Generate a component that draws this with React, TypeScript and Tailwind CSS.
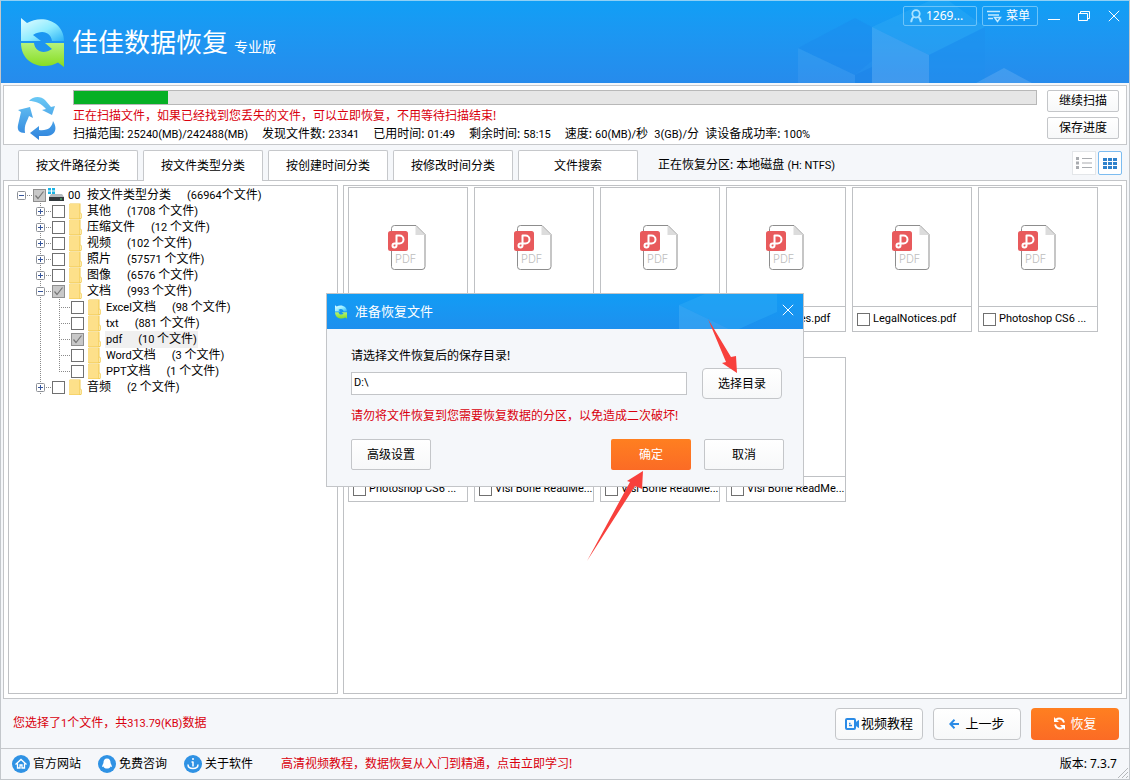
import { useState, type ReactNode } from "react";

type GuideKind = "blank" | "line" | "tee" | "corner" | "plus" | "minus" | "root";

type TreeRow = {
  guides: GuideKind[];
  name: string;
  latin?: string;
  count: string;
  checked?: boolean;
  selected?: boolean;
};

const ROWS: TreeRow[] = [
  { guides: ["blank", "plus"], name: "其他", count: "1708" },
  { guides: ["blank", "plus"], name: "压缩文件", count: "12" },
  { guides: ["blank", "plus"], name: "视频", count: "102" },
  { guides: ["blank", "plus"], name: "照片", count: "57571" },
  { guides: ["blank", "plus"], name: "图像", count: "6576" },
  { guides: ["blank", "minus"], name: "文档", count: "993", checked: true },
  { guides: ["blank", "line", "tee"], latin: "Excel", name: "文档", count: "98" },
  { guides: ["blank", "line", "tee"], latin: "txt", name: "", count: "881" },
  { guides: ["blank", "line", "tee"], latin: "pdf", name: "", count: "10", checked: true, selected: true },
  { guides: ["blank", "line", "tee"], latin: "Word", name: "文档", count: "3" },
  { guides: ["blank", "line", "corner"], latin: "PPT", name: "文档", count: "1" },
  { guides: ["blank", "plus"], name: "音频", count: "2" },
];

const FILES = [
  "LegalNotices.pdf",
  "LegalNotices.pdf",
  "LegalNotices.pdf",
  "LegalNotices.pdf",
  "LegalNotices.pdf",
  "Photoshop CS6 ...",
  "Photoshop CS6 ...",
  "Visi Bone ReadMe...",
  "Visi Bone ReadMe...",
  "Visi Bone ReadMe...",
];

const TABS = ["按文件路径分类", "按文件类型分类", "按创建时间分类", "按修改时间分类", "文件搜索"];

export default function App() {
  return (
    <div className="relative flex min-h-screen flex-col border border-[#c3c7cb] border-t-[#8fd0f5] bg-[#f5f7fa] font-['Noto_Sans','Noto_Sans_CJK_SC',sans-serif] text-xs text-black">
      <Header />
      <ScanStatus />
      <TabBar />
      <main className="mx-0.5 flex grow gap-[5px] border border-[#c3c5c8] bg-white p-1">
        <FileTree />
        <FileGrid />
      </main>
      <ActionBar />
      <Footer />
      <SaveDialog />
    </div>
  );
}

function Num({ children }: { children: ReactNode }) {
  return <span className="font-['Roboto',sans-serif] text-[11px]">{children}</span>;
}

function Header() {
  return (
    <header className="relative flex h-[82px] justify-between bg-linear-to-b from-[#109ff6] to-[#268bec] text-white">
      <svg className="absolute right-0 bottom-0" width="340" height="82" viewBox="0 0 340 82" aria-hidden="true">
        <path d="M9 47 66 17 83 26V60L66 74Z" fill="#1a86ec" opacity=".3" />
        <path d="M9 47 66 74V82H9Z" fill="#fff" opacity=".06" />
        <path d="M66 74 83 66V82H66Z" fill="#1a7fe6" opacity=".4" />
        <path d="M83 26 140 0H160L196 26 140 54Z" fill="#38b4f6" opacity=".3" />
        <path d="M83 26 140 54V82H83Z" fill="#fff" opacity=".12" />
        <path d="M140 54 196 26V82H140Z" fill="#1f8fee" opacity=".4" />
        <path d="M187 82 215 67 243 82Z" fill="#fff" opacity=".13" />
      </svg>
      <div className="flex items-center gap-2 pl-5">
        <Logo size={43} />
        <h1 className="flex items-baseline gap-1.5">
          <span className="text-[26px] leading-8">佳佳数据恢复</span>
          <span className="text-sm">专业版</span>
        </h1>
      </div>
      <div className="relative mt-[5px] flex h-5 items-center gap-[5px] pr-1">
        <button className="flex h-5 w-[74px] items-center gap-1 rounded-xs border border-[#6cc4fa] pl-1.5">
          <svg width="12" height="14" viewBox="0 0 12 14" fill="none" stroke="#a9e2ff" strokeWidth="1.8">
            <circle cx="6" cy="4.8" r="3.7" />
            <path d="M4 7.5C2 9 1.2 11 1.2 13.2M8 7.5c2 1.500 2.800 3.500 2.800 5.700" />
          </svg>
          <span>1269...</span>
        </button>
        <button className="flex h-5 w-14 items-center gap-1 rounded-xs border border-[#6cc4fa] pl-1">
          <svg width="15" height="13" viewBox="0 0 15 13" fill="none" stroke="#c5ebff" strokeWidth="1.4">
            <path d="M0 1.500h13M1 5h11M1 8.500h5" />
            <path d="M7.500 7.500h6l-3 4z" />
          </svg>
          <span>菜单</span>
        </button>
        <div className="flex items-center gap-2">
          <button aria-label="最小化" className="flex h-5 w-[22px] items-center justify-center">
            <svg width="12" height="12" viewBox="0 0 12 12" stroke="#fff">
              <path d="M0 9.500h12" />
            </svg>
          </button>
          <button aria-label="还原" className="flex h-5 w-[22px] items-center justify-center">
            <svg width="12" height="12" viewBox="0 0 12 12" fill="none" stroke="#fff">
              <path d="M.5 3.500h9v7h-9zM2.500 3.500v-2h9v7h-2" />
            </svg>
          </button>
          <button aria-label="关闭" className="flex h-5 w-[22px] items-center justify-center">
            <CloseIcon />
          </button>
        </div>
      </div>
    </header>
  );
}

function CloseIcon() {
  return (
    <svg width="12" height="12" viewBox="0 0 12 12" stroke="#fff">
      <path d="M.8.8l10.400 10.400M11.200.8.8 11.200" />
    </svg>
  );
}

function Logo({ size }: { size: number }) {
  return (
    <svg width={size} height={Math.round(size * 1.14)} viewBox="0 0 43 49" aria-hidden="true">
      <defs>
        <linearGradient id="logoTop" x1="0" y1="0" x2="1" y2="1">
          <stop offset="0" stopColor="#e8fdff" />
          <stop offset=".55" stopColor="#8fecff" />
          <stop offset="1" stopColor="#2bb2f6" />
        </linearGradient>
        <linearGradient id="logoBottom" x1="0" y1="0" x2="0" y2="1">
          <stop offset="0" stopColor="#b5f27c" />
          <stop offset="1" stopColor="#86dc1e" />
        </linearGradient>
      </defs>
      <path d="M0 0 6 5C21-4 43 3 43 23H31C30 15 22 11 12 17L20 23H0Z" fill="url(#logoTop)" />
      <path d="M43 49 37 44.500C22 53 0 46 0 25H13C14 33 22 37 31 31L24 25H43Z" fill="url(#logoBottom)" />
    </svg>
  );
}

function RecycleIcon() {
  return (
    <svg width="40" height="43" viewBox="0 0 40 43" aria-hidden="true">
      <defs>
        <linearGradient id="recycle" gradientUnits="userSpaceOnUse" x1="0" y1="0" x2="0" y2="43">
          <stop offset="0" stopColor="#6bc9f5" />
          <stop offset="1" stopColor="#2f83dd" />
        </linearGradient>
      </defs>
      <g fill="url(#recycle)">
        <path d="M12 4C16-1 24-1 28 3L34 10 38 9 35 18 25 13 29 12C24 6 18 4 12 4Z" />
        <path d="M1 13 13 10 16 21 12 19C10 25 7 27 8 36 2 36 0 33 1 28L4 15Z" />
        <path d="M13 36 22 29V33C30 34 35 31 36 24 41 32 38 38 30 39H22V43Z" />
      </g>
    </svg>
  );
}

function ScanStatus() {
  return (
    <section className="mx-0.5 mt-0.5 flex h-[60px] border border-[#c6c8cb] bg-white">
      <div className="flex w-[69px] items-center pt-1.5 pl-[13px]">
        <RecycleIcon />
      </div>
      <div className="grow pt-1">
        <div
          role="progressbar"
          aria-label="扫描进度"
          aria-valuenow={10}
          className="h-[15px] border border-[#b8b8b8] bg-[#e6e6e6]"
        >
          <div className="h-full w-[9.8%] bg-[#06b025]" />
        </div>
        <p className="mt-0.5 leading-[18px] text-[#d9000d]">
          正在扫描文件，如果已经找到您丢失的文件，可以立即恢复，不用等待扫描结束!
        </p>
        <div className="flex gap-3.5 leading-[18px] whitespace-nowrap">
          <p>扫描范围: <Num>25240(MB)/242488(MB)</Num></p>
          <p>发现文件数: <Num>23341</Num></p>
          <p>已用时间: <Num>01:49</Num></p>
          <p>剩余时间: <Num>58:15</Num></p>
          <p>速度: <Num>60(MB)/</Num>秒&nbsp; <Num>3(GB)/</Num>分&nbsp; 读设备成功率: <Num>100%</Num></p>
        </div>
      </div>
      <div className="flex flex-col gap-[5px] pt-1 pr-[7px] pl-2.5">
        <PlainButton className="h-[22px] w-[72px] rounded-xs">继续扫描</PlainButton>
        <PlainButton className="h-[22px] w-[72px] rounded-xs">保存进度</PlainButton>
      </div>
    </section>
  );
}

function PlainButton({ className, children }: { className: string; children: ReactNode }) {
  return (
    <button
      className={`flex items-center justify-center border border-[#c4c6c9] bg-linear-to-b from-white to-[#f7f8f9] ${className}`}
    >
      {children}
    </button>
  );
}

function TabBar() {
  const [active, setActive] = useState(1);
  return (
    <div className="mt-[5px] flex h-[30px] pr-[7px] pl-[17px]">
      <div className="flex gap-[5px]">
        {TABS.map((tab, i) => (
          <button
            key={tab}
            onClick={() => setActive(i)}
            className={
              i === active
                ? "relative -mb-px w-[120px] rounded-t-xs border border-b-0 border-[#c6c8cb] bg-white"
                : "w-[120px] rounded-t-xs border border-b-0 border-[#c6c8cb] bg-white"
            }
          >
            {tab}
          </button>
        ))}
      </div>
      <p className="ml-5 grow leading-[30px]">
        正在恢复分区: 本地磁盘 <Num>(H: NTFS)</Num>
      </p>
      <div className="flex items-start gap-0.5 pt-px">
        <button aria-label="列表" className="flex size-6 items-center justify-center border border-[#e3e6e9] bg-white">
          <svg width="16" height="12" viewBox="0 0 16 12" fill="#a9acb0">
            <path d="M0 0h3v3H0zM0 4.500h3v3H0zM0 9h3v3H0zM6 1h10v1H6zM6 5.500h10v1H6zM6 10h10v1H6z" />
          </svg>
        </button>
        <button aria-label="缩略图" className="flex size-6 items-center justify-center rounded-xs border border-[#7cbcf0] bg-white">
          <svg width="14" height="11" viewBox="0 0 14 11" fill="#2f82cc">
            <path d="M0 0h4v3H0zM5 0h4v3H5zM10 0h4v3h-4zM0 4h4v3H0zM5 4h4v3H5zM10 4h4v3h-4zM0 8h4v3H0zM5 8h4v3H5zM10 8h4v3h-4z" />
          </svg>
        </button>
      </div>
    </div>
  );
}

function Guide({ kind }: { kind: GuideKind }) {
  const boxed = kind === "plus" || kind === "minus" || kind === "root";
  return (
    <svg width="21" height="16" viewBox="0 0 21 16" className="-mr-0.5 flex-none" fill="none" aria-hidden="true">
      <g stroke="#8a8a8a" strokeDasharray="1 1">
        {(kind === "line" || kind === "tee" || kind === "plus" || kind === "minus") && <path d="M9.500 0v16" />}
        {kind === "corner" && <path d="M9.500 0v8" />}
        {kind !== "blank" && kind !== "line" && <path d="M9 8.500h11" />}
      </g>
      {boxed && <rect x="5.500" y="4.500" width="8" height="8" rx="1" fill="#fff" stroke="#8c9097" />}
      {boxed && <path d="M7 8.500h5" stroke="#35559c" />}
      {kind === "plus" && <path d="M9.500 6v5" stroke="#35559c" />}
    </svg>
  );
}

function Check({ label, defaultChecked }: { label: string; defaultChecked?: boolean }) {
  return (
    <span className="relative flex size-[13px] flex-none">
      <input
        type="checkbox"
        aria-label={label}
        defaultChecked={defaultChecked}
        className="peer size-[13px] appearance-none border border-[#707070] bg-white checked:border-[#8f8f8f] checked:bg-[#c8c8c8]"
      />
      <svg
        className="pointer-events-none absolute inset-0 hidden peer-checked:block"
        width="13"
        height="13"
        viewBox="0 0 13 13"
        fill="none"
        stroke="#777"
        strokeWidth="1.200"
      >
        <path d="M2.500 6.500 5 9.500l5.500-7" />
      </svg>
    </span>
  );
}

function FolderIcon() {
  return (
    <svg width="13" height="16" viewBox="0 0 13 16" className="flex-none" aria-hidden="true">
      <path d="M0 1.500 1 .5h10.500v9L13 11v4L11.500 16H0z" fill="#f0c84c" />
      <path d="M0 1.500 1 1h9.500v14.500H0z" fill="#fde08a" />
      <path d="M11 10.500h1.500v4.500H11z" fill="#fbe9ab" />
    </svg>
  );
}

function DriveIcon() {
  return (
    <svg width="16" height="14" viewBox="0 0 16 14" className="flex-none" aria-hidden="true">
      <path d="M0 0h3v2.500H0zM4 0h3v2.500H4zM0 3.500h3V6H0zM4 3.500h3V6H4z" fill="#19b4e6" />
      <path d="M3 6h11l2 3H1z" fill="#b5bbbf" />
      <path d="M1 9h15v4H1z" fill="#33393d" />
      <path d="M12 10.500h2v1h-2z" fill="#58e07c" />
    </svg>
  );
}

function FileTree() {
  return (
    <nav className="w-[330px] flex-none border border-[#bfc1c4] pt-px pl-[3px] leading-4 whitespace-nowrap">
      <div className="flex h-4 items-center">
        <Guide kind="root" />
        <span className="ml-0.5">
          <Check label="按文件类型分类" defaultChecked />
        </span>
        <span className="ml-0.5">
          <DriveIcon />
        </span>
        <span className="ml-1 w-[19px]">
          <Num>00</Num>
        </span>
        <span>按文件类型分类</span>
        <span className="ml-4">
          <Num>(66964</Num>个文件<Num>)</Num>
        </span>
      </div>
      <ul>
        {ROWS.map((row) => (
          <li key={`${row.latin ?? ""}${row.name}`} className="flex h-4 items-center">
            {row.guides.map((kind, i) => (
              <Guide key={i} kind={kind} />
            ))}
            <span className="mr-1 ml-0.5">
              <Check label={`${row.latin ?? ""}${row.name}`} defaultChecked={row.checked} />
            </span>
            <FolderIcon />
            <span className={row.selected ? "ml-1 flex gap-4 bg-[#f0f0f0] px-px" : "ml-1 flex gap-4 px-px"}>
              <span>
                {row.latin && <Num>{row.latin}</Num>}
                {row.name}
              </span>
              <span>
                <Num>({row.count} </Num>个文件<Num>)</Num>
              </span>
            </span>
          </li>
        ))}
      </ul>
    </nav>
  );
}

function PdfIcon() {
  return (
    <svg width="40" height="45" viewBox="0 0 40 45" aria-hidden="true">
      <path d="M3.500 3.500a3 3 0 0 1 3-3H28l9 9v32a3 3 0 0 1-3 3H6.500a3 3 0 0 1-3-3z" fill="#fff" stroke="#8d8d8d" />
      <path d="M27.500 1v9H37z" fill="#dcdcdc" />
      <rect y="6" width="20" height="20" rx="2.500" fill="#e85a5c" />
      <path
        d="M8.500 16V10.500H11.500a4 4 0 0 1 0 8H6.500a2 2 0 1 0 2 2.200V16"
        fill="none"
        stroke="#fff"
        strokeWidth="2"
        strokeLinejoin="round"
      />
      <text x="7" y="38" fontSize="11" fill="#bdbdbd" className="font-['Inter',sans-serif] font-light">
        PDF
      </text>
    </svg>
  );
}

function FileGrid() {
  return (
    <section className="grow border border-[#bfc1c4] pt-px pl-1">
      <ul className="flex flex-wrap gap-x-1.5 gap-y-[25px]">
        {FILES.map((file, i) => (
          <li key={i} className="h-[145px] w-[120px] border border-[#bfc1c4]">
            <div className="flex h-[119px] items-center justify-center border-b border-[#bfc1c4]">
              {/* only the first row has its thumbnails loaded */}
              {i < 6 && <PdfIcon />}
            </div>
            <div className="flex h-6 items-center gap-[3px] pl-1 whitespace-nowrap">
              <Check label={file} />
              <Num>{file}</Num>
            </div>
          </li>
        ))}
      </ul>
    </section>
  );
}

function ActionBar() {
  return (
    <section className="flex h-[50px] items-center justify-between border-b border-[#c6c8cb] pr-2.5 pl-3">
      <p className="text-[#d9000d]">
        您选择了<Num>1</Num>个文件，共<Num>313.79(KB)</Num>数据
      </p>
      <div className="flex gap-2.5 text-[13px]">
        <PlainButton className="h-8 w-[88px] gap-0.5 rounded-sm">
          <svg width="14" height="12" viewBox="0 0 14 12" fill="none" stroke="#2b8be6" strokeWidth="2">
            <rect x="1" y="1" width="9" height="10" rx="1" />
            <path d="M13.500 2.500v7l-2.500-2V4.500z" fill="#2b8be6" strokeWidth="1" />
            <path d="M4 7.500h3M4 5.500h1.500" strokeWidth="1.500" />
          </svg>
          视频教程
        </PlainButton>
        <PlainButton className="h-8 w-[88px] gap-1.5 rounded-sm">
          <svg width="10" height="10" viewBox="0 0 10 10" fill="none" stroke="#2b8be6" strokeWidth="2">
            <path d="M10 5H1.500M5.500.8 1.300 5l4.200 4.200" />
          </svg>
          上一步
        </PlainButton>
        <button className="flex h-8 w-[88px] items-center justify-center gap-1 rounded-sm bg-linear-to-b from-[#ff7f20] to-[#fb6b25] text-white">
          <svg width="13" height="13" viewBox="0 0 13 13" fill="none" stroke="#fff" strokeWidth="2">
            <path d="M3 2.500C6 .5 10 1.500 11 5.500M10 10.500C7 12.500 3 11.500 2 7.500" />
            <path d="M1 0v5h5zM12 13V8H7z" fill="#fff" stroke="none" />
          </svg>
          恢复
        </button>
      </div>
    </section>
  );
}

function Footer() {
  return (
    <footer className="relative flex h-[30px] items-center pr-3 pl-[11px]">
      <div className="flex gap-[17px]">
        <FooterLink label="官方网站">
          <path d="M3.500 9.500 9 4.500l5.500 5M5.500 8.500v4.500h2.500v-3h2v3h2.500V8.500" fill="none" stroke="#fff" strokeWidth="1.300" />
        </FooterLink>
        <FooterLink label="免费咨询">
          <path d="M9 3.500c-2.500 0-3.500 2-3.500 4 0 1.500-1.500 2.500-1.500 4.500l1.500-.5c.5 1.500 1.500 2 3.500 2s3-.5 3.500-2l1.500.5c0-2-1.500-3-1.500-4.500 0-2-1-4-3.500-4z" fill="#fff" />
        </FooterLink>
        <FooterLink label="关于软件">
          <path d="M9 3v2M9 6.500v5M7.500 7H9M4 9.500c0 2.500 2 4 5 4s5-1.500 5-4" fill="none" stroke="#fff" strokeWidth="1.500" />
        </FooterLink>
      </div>
      <a href="#learn" className="ml-7 text-[#d9000d]">
        高清视频教程，数据恢复从入门到精通，点击立即学习!
      </a>
      <p className="ml-auto">版本: 7.3.7</p>
      <svg className="absolute right-px bottom-px" width="10" height="10" viewBox="0 0 10 10" stroke="#b5b8bb" aria-hidden="true">
        <path d="M0 10 10 0M4 10l6-6M8 10l2-2" />
      </svg>
    </footer>
  );
}

function FooterLink({ label, children }: { label: string; children: ReactNode }) {
  return (
    <a href="#link" className="flex items-center gap-[3px]">
      <svg width="18" height="18" viewBox="0 0 18 18" aria-hidden="true">
        <circle cx="9" cy="9" r="9" fill="#2f92e4" />
        {children}
      </svg>
      {label}
    </a>
  );
}

function SaveDialog() {
  return (
    <div className="absolute inset-0 flex items-center justify-center">
      <div role="dialog" aria-labelledby="dialog-title" className="relative w-[478px] border border-[#c3c5c8] bg-[#f5f7fa]">
        <div className="relative flex h-[35px] items-center bg-linear-to-b from-[#119cf5] to-[#1d90ee] pr-[9px] pl-2 text-white">
          <svg className="absolute inset-y-0 right-0" width="124" height="35" viewBox="0 0 124 35" aria-hidden="true">
            <path d="M0 11 26 0H98V18L60 35H50Z" fill="#2fabf6" opacity=".45" />
            <path d="M0 11 50 35H0Z" fill="#5bbbf6" opacity=".35" />
          </svg>
          <Logo size={12} />
          <h2 id="dialog-title" className="ml-2 grow text-[13px]">准备恢复文件</h2>
          <button aria-label="关闭" className="relative mb-1">
            <CloseIcon />
          </button>
        </div>
        <form className="pt-[18px] pr-[19px] pb-4 pl-6" onSubmit={(e) => e.preventDefault()}>
          <label htmlFor="save-dir" className="block leading-[18px]">请选择文件恢复后的保存目录!</label>
          <div className="mt-[3px] flex items-center gap-[15px] pr-0.5">
            <input
              id="save-dir"
              type="text"
              defaultValue="D:\"
              className="h-[23px] min-w-0 grow border border-[#c3c5c8] bg-white px-0.5 pb-0.5 font-['Roboto',sans-serif] text-[11px] outline-none"
            />
            <PlainButton className="h-[31px] w-20 rounded-sm">选择目录</PlainButton>
          </div>
          <p className="mt-2 leading-[18px] text-[#d9000d]">
            请勿将文件恢复到您需要恢复数据的分区，以免造成二次破坏!
          </p>
          <div className="mt-3.5 flex gap-[13px]">
            <PlainButton className="mr-auto h-[31px] w-20 rounded-xs">高级设置</PlainButton>
            <button className="h-[31px] w-20 rounded-xs bg-linear-to-b from-[#ff7f20] to-[#fb6b25] text-white">确定</button>
            <PlainButton className="h-[31px] w-20 rounded-xs">取消</PlainButton>
          </div>
        </form>
        {/* hint arrows over the dialog */}
        <svg className="pointer-events-none absolute top-0 left-0" width="476" height="280" viewBox="0 0 476 280" aria-hidden="true">
          <path d="M381 25 404 63 409 62 410 79 395 69 399 68Z" fill="#f8403c" />
          <path d="M316 177 315 195 308 192 260 267 303 188 300 187Z" fill="#f8403c" />
        </svg>
      </div>
    </div>
  );
}
